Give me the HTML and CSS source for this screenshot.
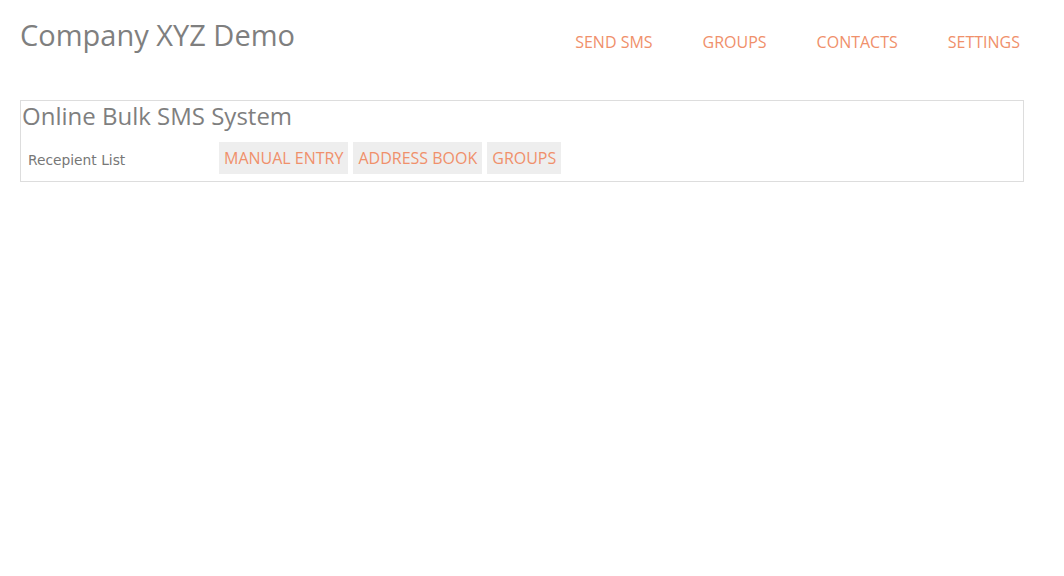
FILE: index.html
```html
<!DOCTYPE html>
<html>
<head>
<meta charset="utf-8">
<link rel="stylesheet" href="styles.css">
</head>
<body>
<div class="page">
  <header class="header">
    <div class="brand">Company XYZ Demo</div>
    <nav class="nav">
      <a class="nav-link" href="#">SEND SMS</a>
      <a class="nav-link" href="#">GROUPS</a>
      <a class="nav-link" href="#">CONTACTS</a>
      <a class="nav-link" href="#">SETTINGS</a>
    </nav>
  </header>
  <section class="panel">
    <h1 class="panel-title">Online Bulk SMS System</h1>
    <div class="row">
      <div class="label">Recepient List</div>
      <div class="tabs">
        <a class="tab" href="#">MANUAL ENTRY</a>
        <a class="tab" href="#">ADDRESS BOOK</a>
        <a class="tab" href="#">GROUPS</a>
      </div>
    </div>
  </section>
</div>
</body>
</html>
```
FILE: styles.css
```css
html, body {
  margin: 0;
  padding: 0;
  background: #ffffff;
}
body {
  font-family: "Open Sans", sans-serif;
  color: #808080;
}
.page {
  padding: 0 40px 0 20px;
}
.header {
  display: flex;
  justify-content: space-between;
  align-items: flex-start;
  height: 100px;
}
.brand {
  font-size: 29px;
  line-height: 38px;
  margin-top: 16px;
  color: #7f7f7f;
}
.nav {
  display: flex;
  gap: 50px;
  margin-top: 30px;
  margin-right: 4px;
}
.nav-link {
  font-size: 16px;
  line-height: 24px;
  color: #f0906b;
  text-decoration: none;
}
.panel {
  border: 1px solid #dddddd;
  padding: 0 0 7px 1px;
}
.panel-title {
  margin: 0;
  font-weight: normal;
  font-size: 24px;
  line-height: 30px;
  color: #7f7f7f;
}
.row {
  display: flex;
  align-items: center;
  margin-top: 11px;
}
.label {
  width: 197px;
  padding-left: 6px;
  padding-top: 4px;
  box-sizing: border-box;
  font-family: "DejaVu Sans", Verdana, sans-serif;
  font-size: 13.8px;
  color: #777777;
}
.tabs {
  display: flex;
  gap: 5px;
}
.tab {
  background: #eeeeee;
  color: #f0906b;
  text-decoration: none;
  font-size: 16px;
  line-height: 31px;
  padding: 1px 5px 0 5px;
}
```
